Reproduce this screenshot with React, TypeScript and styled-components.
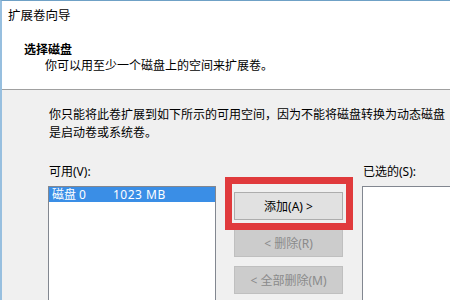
import React from "react";
import styled, { createGlobalStyle } from "styled-components";

const Global = createGlobalStyle`
  html, body { margin: 0; padding: 0; background: #f0f0f0; }
  body { font-family: "Noto Sans", "Noto Sans CJK SC", sans-serif; font-size: 12px; color: #000; }
`;

const Window = styled.div`
  width: 450px;
  height: 300px;
  box-sizing: border-box;
  overflow: hidden;
  border-top: 1px solid #6fa1c6;
  border-left: 2px solid #97bfdf;
  background: #f0f0f0;
`;

const Header = styled.div`
  background: #ffffff;
  height: 89px;
  box-sizing: border-box;
  border-bottom: 1px solid #a0a0a0;
  padding: 7px 0 0 6px;
`;

const Line = styled.div<{ $indent?: number; $bold?: boolean }>`
  line-height: 16px;
  padding-left: ${(p) => p.$indent ?? 0}px;
  font-weight: ${(p) => (p.$bold ? 700 : 400)};
  white-space: nowrap;
`;

const Title = styled(Line)`
  font-size: 12.5px;
  margin-bottom: 18px;
`;

const Body = styled.div`
  padding: 16px 0 0 46px;
`;

const Paragraph = styled.p`
  margin: 0 0 22px 1px;
  width: 400px;
  line-height: 18px;
`;

const Columns = styled.div`
  display: grid;
  grid-template-columns: 168px 109px 168px;
  column-gap: 18px;
  width: 480px;
`;

const Column = styled.div<{ $shift?: number }>`
  display: flex;
  flex-direction: column;
  margin-left: ${(p) => p.$shift ?? 0}px;
`;

const Label = styled.div`
  line-height: 16px;
  height: 16px;
  margin-bottom: 6px;
  padding-left: 1px;
`;

const ListBox = styled.div`
  height: 130px;
  background: #ffffff;
  border: 1px solid #828790;
  box-sizing: border-box;
`;

const Item = styled.div<{ $selected?: boolean }>`
  display: flex;
  height: 15px;
  line-height: 15px;
  padding-left: 3px;
  background: ${(p) => (p.$selected ? "#3a8ee6" : "transparent")};
  color: ${(p) => (p.$selected ? "#ffffff" : "#000")};
  white-space: nowrap;
`;

const ItemName = styled.span`
  width: 61px;
`;

const ItemSize = styled.span`
  letter-spacing: 0.5px;
`;

const Buttons = styled.div`
  display: flex;
  flex-direction: column;
  gap: 9px;
  padding-top: 28px;
`;

const Button = styled.button<{ $disabled?: boolean }>`
  height: 28px;
  width: 109px;
  box-sizing: border-box;
  font-family: inherit;
  font-size: 12px;
  padding: 0;
  border: 1px solid ${(p) => (p.$disabled ? "#bfbfbf" : "#adadad")};
  background: ${(p) => (p.$disabled ? "#cccccc" : "#e1e1e1")};
  color: ${(p) => (p.$disabled ? "#8a8a8a" : "#000")};
`;

const Highlight = styled.div`
  position: relative;
`;

const RedFrame = styled.span`
  position: absolute;
  top: -15px;
  left: -9px;
  right: -10px;
  bottom: -10px;
  border: 7px solid #e03a3c;
  pointer-events: none;
`;

export default function App() {
  return (
    <>
      <Global />
      <Window>
        <Header>
          <Title>扩展卷向导</Title>
          <Line $indent={16} $bold>选择磁盘</Line>
          <Line $indent={37}>你可以用至少一个磁盘上的空间来扩展卷。</Line>
        </Header>
        <Body>
          <Paragraph>
            你只能将此卷扩展到如下所示的可用空间，因为不能将磁盘转换为动态磁盘是启动卷或系统卷。
          </Paragraph>
          <Columns>
            <Column>
              <Label>可用(V):</Label>
              <ListBox>
                <Item $selected>
                  <ItemName>磁盘 0</ItemName>
                  <ItemSize>1023 MB</ItemSize>
                </Item>
              </ListBox>
            </Column>
            <Buttons>
              <Highlight>
                <Button>添加(A) &gt;</Button>
                <RedFrame />
              </Highlight>
              <Button $disabled>&lt; 删除(R)</Button>
              <Button $disabled>&lt; 全部删除(M)</Button>
            </Buttons>
            <Column $shift={1}>
              <Label>已选的(S):</Label>
              <ListBox />
            </Column>
          </Columns>
        </Body>
      </Window>
    </>
  );
}
